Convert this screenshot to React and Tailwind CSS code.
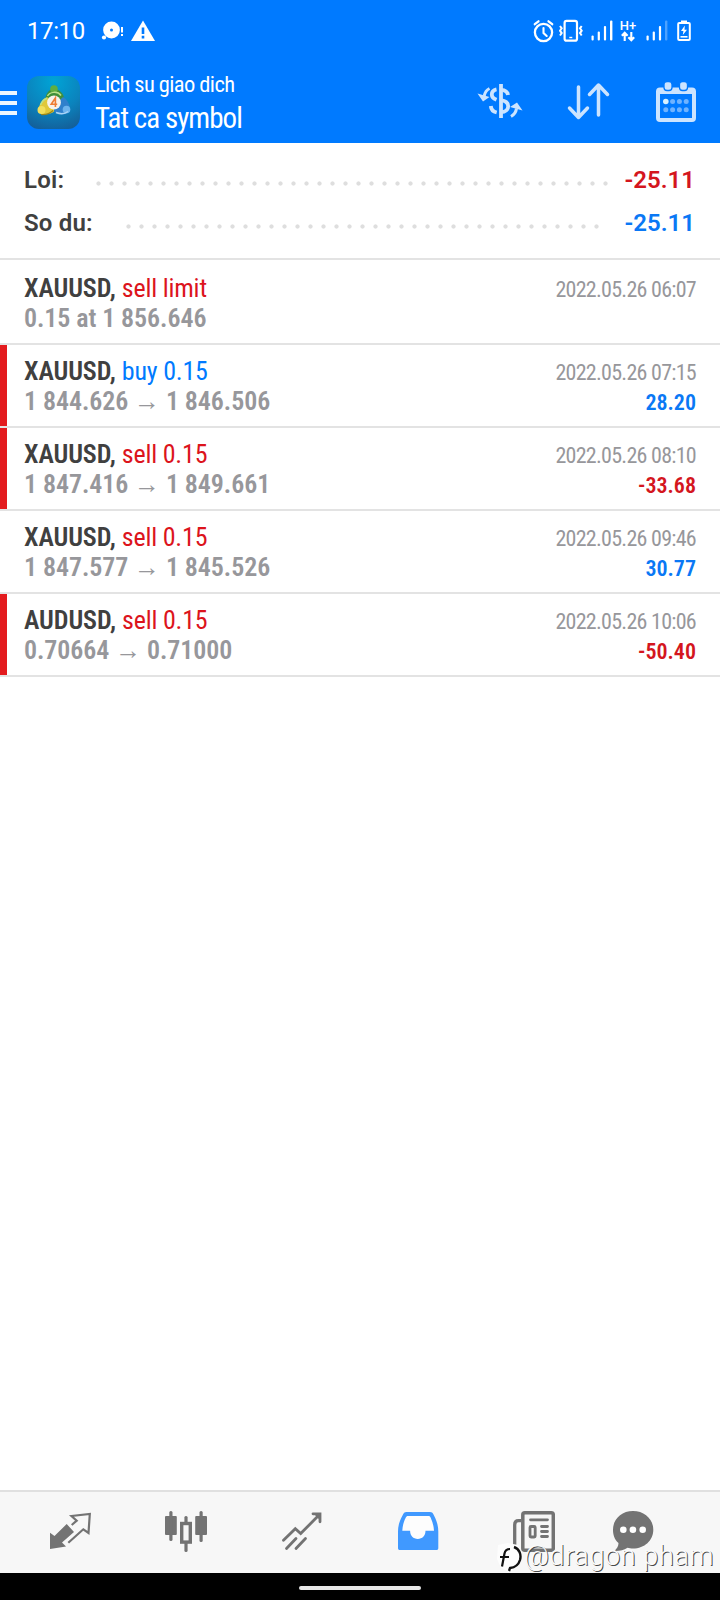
import { clsx } from "clsx";

const deals = [
  { symbol: "XAUUSD", action: "sell limit", side: "sell", detail: ["0.15 at 1 856.646"], time: "2022.05.26 06:07" },
  { symbol: "XAUUSD", action: "buy 0.15", side: "buy", detail: ["1 844.626", "1 846.506"], time: "2022.05.26 07:15", profit: "28.20", marked: true },
  { symbol: "XAUUSD", action: "sell 0.15", side: "sell", detail: ["1 847.416", "1 849.661"], time: "2022.05.26 08:10", profit: "-33.68", marked: true },
  { symbol: "XAUUSD", action: "sell 0.15", side: "sell", detail: ["1 847.577", "1 845.526"], time: "2022.05.26 09:46", profit: "30.77" },
  { symbol: "AUDUSD", action: "sell 0.15", side: "sell", detail: ["0.70664", "0.71000"], time: "2022.05.26 10:06", profit: "-50.40", marked: true },
];

function SignalIcon({ weak }) {
  return (
    <svg width="22" height="22" viewBox="0 0 22 22" fill="#fff">
      <rect x="0.5" y="15.5" width="2.2" height="5" rx="1" />
      <rect x="6.7" y="11.5" width="2.2" height="9" rx="1" />
      <rect x="12.9" y="6" width="2.2" height="14.5" rx="1" />
      <rect x="19" y="0.5" width="2.4" height="20" rx="1" opacity={weak ? 0.3 : 1} />
    </svg>
  );
}

function StatusBar() {
  return (
    <div className="flex h-[62px] items-center pl-[27px] pr-[29px]">
      <span className="w-[74px] text-[24px] leading-none tracking-[-0.4px]">17:10</span>
      <svg width="23" height="21" viewBox="0 0 23 21" fill="#fff">
        <circle cx="10.5" cy="9" r="8.4" />
        <circle cx="10.5" cy="9" r="1.5" fill="#007aff" />
        <circle cx="3" cy="16.5" r="2.1" />
        <rect x="20" y="6" width="2" height="5.5" />
        <rect x="20" y="13" width="2" height="2" />
      </svg>
      <svg className="ml-[7px]" width="24" height="22" viewBox="0 0 24 22">
        <path d="M12 0.5 24 21H0Z" fill="#fff" />
        <path d="M12 7.5v6.5M12 15.8v2.6" stroke="#007aff" strokeWidth="2.6" />
      </svg>
      <div className="ml-auto flex items-center">
        <svg width="22" height="24" viewBox="0 0 22 24" fill="none" stroke="#fff" strokeLinecap="round">
          <circle cx="10.5" cy="13.5" r="8.6" strokeWidth="2.3" />
          <path d="M10.5 9v5l3.2 3" strokeWidth="2.1" />
          <path d="M1.8 5.2 5.5 2.3M19.2 5.2 15.5 2.3" strokeWidth="2.3" />
        </svg>
        <svg className="ml-[4px]" width="24" height="24" viewBox="0 0 24 24" fill="none" stroke="#fff">
          <rect x="5.6" y="1.9" width="12.4" height="19.8" rx="2" strokeWidth="2.2" />
          <path d="M10.3 18.5h3" strokeWidth="1.4" />
          <path d="M1 7l1.7 2.3L1 11.7l1.7 2.4L1 16.5M22.7 7 21 9.3l1.7 2.4L21 14.1l1.7 2.4" strokeWidth="2" />
        </svg>
        <span className="ml-[8px] flex">
          <SignalIcon />
        </span>
        <span className="ml-[6px] flex w-[18px] flex-col items-center">
          <span className="text-[13px] font-medium leading-[11px]">H+</span>
          <svg width="14" height="11" viewBox="0 0 14 11" fill="none" stroke="#fff" strokeWidth="2.1">
            <path d="M3.7 10V2.2M0.8 4.8 3.7 1.8l2.9 3M10.3 1v7.8M7.4 6.2l2.9 3 2.9-3" />
          </svg>
        </span>
        <span className="ml-[9px] flex">
          <SignalIcon weak />
        </span>
        <svg className="ml-[9px]" width="14" height="22" viewBox="0 0 14 22">
          <rect x="4" y="0.5" width="6" height="3" fill="#fff" />
          <rect x="1.2" y="3" width="11.6" height="17" rx="1" fill="none" stroke="#fff" strokeWidth="2" />
          <path d="M7.8 5.5 4 11h2.4l-.6 4L10 9.7H7.5z" fill="#fff" />
          <path d="M3.5 16.8h7" stroke="#fff" strokeWidth="1.6" />
        </svg>
      </div>
    </div>
  );
}

function AppLogo() {
  return (
    <svg className="ml-[10px]" width="53" height="53" viewBox="0 0 53 53">
      <defs>
        <radialGradient id="tile" cx="0.5" cy="0.1" r="1">
          <stop offset="0" stopColor="#00a4d6" />
          <stop offset="0.55" stopColor="#0b83bd" />
          <stop offset="1" stopColor="#155a94" />
        </radialGradient>
      </defs>
      <rect width="53" height="53" rx="12" fill="url(#tile)" />
      <path d="M27 13c-5 0-8.500 5-8.500 10l8.500 4 10-4c0-5.500-5-10-10-10z" fill="#3f8f3a" />
      <path d="M20 21c-5 2-9 9-8.500 15.500 5 3 12 2 15.500-1V27z" fill="#e0c83a" />
      <path d="M36 21c5 3 7.500 9 7 14.500-4 4.500-12 3.500-16 0l2-8z" fill="#2f80cc" />
      <circle cx="27" cy="13" r="3.800" fill="#5fae42" />
      <circle cx="14.500" cy="34" r="4" fill="#f2df5c" />
      <circle cx="39.500" cy="33.500" r="3.800" fill="#6db4ee" />
      <path d="M20.500 20c2-4 10-5.500 13.500-.5M13.500 29c1.500-4 4-6 6.500-6.500" fill="none" stroke="#b9e08c" strokeWidth="1.500" />
      <path d="M29 36.500c4 1.500 9 1.500 12-1" fill="none" stroke="#a9d4f5" strokeWidth="1.500" />
      <path d="M14 38.500c5 .5 9-1 12-4" fill="none" stroke="#98851d" strokeWidth="1.200" />
      <circle cx="27" cy="26.500" r="6.900" fill="#f7f2ec" />
      <path d="M28.400 31v-9l-4.200 6.300h6" fill="none" stroke="#ee7d35" strokeWidth="1.600" />
    </svg>
  );
}

function Toolbar() {
  return (
    <div className="flex h-[81px] items-center">
      <div className="flex flex-col gap-[6px]">
        <span className="h-[4px] w-[17px] bg-[#eaf6ff]" />
        <span className="h-[4px] w-[17px] bg-[#eaf6ff]" />
        <span className="h-[4px] w-[17px] bg-[#eaf6ff]" />
      </div>
      <AppLogo />
      <div className="ml-[15px] font-stretch-[75%]">
        <p className="text-[22.5px] leading-[30px] tracking-[-0.6px]">Lich su giao dich</p>
        <p className="text-[29px] leading-[38px] tracking-[-0.95px]">Tat ca symbol</p>
      </div>
      <svg className="mr-px mb-[3px] ml-auto" width="46" height="36" viewBox="0 0 46 36" fill="none" stroke="#cce4ff" strokeWidth="3.800">
        <path d="M24 1v34" />
        <path d="M31 12c-.5-3.500-3-5-7-5.200M24 17.200c5 .8 7.200 2.800 7.200 6s-2.700 5.800-7.200 6" />
        <path d="M19.500 6.300c-3 .6-4.700 2.400-4.700 5.200 0 2.400 1.400 4 4.700 5.300M13.800 23c.3 3.600 2.400 5.700 5.900 6.500" />
        <path d="M12.500 5.500C9.500 7 8 9 7.200 13M34 33.500c3.500-2 5-4.500 5.500-8" strokeWidth="3" />
        <path d="M0.500 10.500l5.500 8 6.500-4.500zM45.500 27.500l-5.500-8-7 4.500z" fill="#cce4ff" stroke="none" />
      </svg>
      <svg className="mb-[3px] ml-[43px]" width="44" height="38" viewBox="0 0 44 38" fill="none" stroke="#cce4ff" strokeWidth="3.500" strokeLinecap="round" strokeLinejoin="round">
        <path d="M11.500 5v30M2.500 26 11.500 35.500l9-9.500M31.500 33V3.500M22.500 12.500l9-9.500 9 9.500" />
      </svg>
      <svg className="mr-[24px] mb-[2px] ml-[45px]" width="40" height="41" viewBox="0 0 40 41">
        <rect x="2" y="8.500" width="36" height="30.500" rx="2" fill="none" stroke="#cce4ff" strokeWidth="4" />
        <path d="M2 8h36v5H2z" fill="#cce4ff" />
        <g fill="#cce4ff" stroke="#007aff" strokeWidth="1.300">
          <rect x="8" y="0.500" width="8" height="9" rx="3" />
          <rect x="23.500" y="0.500" width="8" height="9" rx="3" />
        </g>
        <g fill="#6fb3ff">
          <circle cx="9.800" cy="20.500" r="2.800" fill="#d8f1ff" />
          <circle cx="16.600" cy="20.500" r="2.500" />
          <circle cx="23.400" cy="20.500" r="2.500" />
          <circle cx="30.200" cy="20.500" r="2.500" />
          <circle cx="9.800" cy="28.800" r="2.500" />
          <circle cx="16.600" cy="28.800" r="2.500" />
          <circle cx="23.400" cy="28.800" r="2.500" />
          <circle cx="30.200" cy="28.800" r="2.500" />
        </g>
      </svg>
    </div>
  );
}

function SummaryRow({ label, value, labelClass, dotsClass, valueClass }) {
  return (
    <div className="flex h-[43px] items-center">
      <span className={clsx("font-semibold tracking-[0.2px] text-[#404040]", labelClass)}>{label}</span>
      <span
        className={clsx(
          "mt-[7px] h-[13px] bg-[radial-gradient(circle,#dedede_1.700px,transparent_2.500px)] bg-[length:13px_13px]",
          dotsClass
        )}
      />
      <span className={clsx("ml-auto font-semibold", valueClass)}>{value}</span>
    </div>
  );
}

function DealRow({ deal, first }) {
  const { symbol, action, side, detail, time, profit, marked } = deal;
  const loss = profit?.startsWith("-");

  return (
    <li className={clsx("flex border-b-2 border-[#e3e3e3]", first ? "h-[85px]" : "h-[83px]")}>
      <span className={clsx("w-[7px]", marked && "bg-[#e31b1e]")} />
      <div
        className={clsx(
          "flex flex-1 justify-between pr-[24px] pl-[17px] font-stretch-[75%]",
          first ? "pt-[13px]" : "pt-[11px]"
        )}
      >
        <div className="text-[26px] leading-[30px]">
          <p className="text-[#404040]">
            <span className="font-semibold tracking-[-0.1px]">{symbol},</span>{" "}
            <span className={clsx("tracking-[-0.2px]", side === "buy" ? "text-[#007aff]" : "text-[#dc141c]")}>
              {action}
            </span>
          </p>
          <p className="font-semibold tracking-[-0.08px] text-[#97979b]">{detail.join(" → ")}</p>
        </div>
        <div className="pt-[2px] text-right text-[22px] leading-[30px]">
          <p className="tracking-[-0.72px] text-[#97979b]">{time}</p>
          {profit && (
            <p className={clsx("font-semibold", loss ? "text-[#d4161e]" : "text-[#0a78f5]")}>{profit}</p>
          )}
        </div>
      </div>
    </li>
  );
}

function NavIcon({ children, className }) {
  return (
    <svg className={className} width="42" height="42" viewBox="0 0 42 42" fill="none">
      {children}
    </svg>
  );
}

function BottomNav() {
  return (
    <nav className="relative flex h-[83px] gap-[74px] border-t-2 border-[#e0e0e0] bg-[#f7f7f7] pt-[19px] pl-[49px]">
      <NavIcon>
        <path d="M1 21.700 5.500 25 17.700 13 25 21 13 31.500l4 4L1 38z" fill="#737373" />
        <path d="M22.700 14l5-4.300L22.500 5l18.300-2-1.300 19-5.200-3.700-15 13.500" stroke="#737373" strokeWidth="2.200" />
      </NavIcon>
      <NavIcon>
        <g fill="#737373">
          <rect x="0" y="5" width="11.800" height="19" rx="1" />
          <rect x="4.300" y="0" width="3.200" height="30" rx="1.500" />
          <rect x="30.200" y="5" width="11.800" height="19" rx="1" />
          <rect x="34.500" y="0" width="3.200" height="31" rx="1.500" />
          <rect x="19.400" y="5" width="3.200" height="7" rx="1.500" />
          <rect x="19.400" y="31" width="3.200" height="10" rx="1.500" />
        </g>
        <rect x="16.700" y="12.500" width="8.600" height="18.600" stroke="#737373" strokeWidth="3.400" />
      </NavIcon>
      <NavIcon>
        <g stroke="#737373" strokeWidth="2.800" strokeLinecap="round">
          <path d="M2.500 29.300 14.300 17.700l5.400 4.900L38 4" />
          <path d="M32 2.800h7v8" />
          <path d="M5.500 37.500l9.500-10M15 37.500l9.500-10" />
        </g>
        <path d="M32 2h7.800v8z" fill="#737373" />
      </NavIcon>
      <NavIcon>
        <path d="M9.500 1h23.500c2 0 3 1 4 3.500 3 6 4.300 10.500 4.300 16V37c0 1.500-.7 2-2 2H3c-1.300 0-2-.5-2-2V20.500c0-5.500 1.300-10 4.500-16C6.500 2 7.500 1 9.500 1z" fill="#4099ff" />
        <path d="M11 5h20.500c1.200 0 1.700.5 2.200 1.700 2 4.300 3 8.300 3.300 13.100h-8.500c0 5-3.200 8.200-7.700 8.200s-7.700-3.200-7.700-8.200H5.300C5.600 15 6.500 11 8.700 6.700 9.300 5.500 9.800 5 11 5z" fill="#fdfdfd" />
      </NavIcon>
      <NavIcon>
        <rect x="9.800" y="1.800" width="30.500" height="37.500" rx="2" stroke="#737373" strokeWidth="3.500" />
        <path d="M8 9.700H5.500c-2.500 0-3.800 1.500-3.800 4V40" stroke="#737373" strokeWidth="3.300" />
        <path d="M17.500 8.800h17M28.500 15.500h6M28.500 20.500h6M28.500 25.500h6" stroke="#737373" strokeWidth="2.800" strokeLinecap="round" />
        <rect x="17" y="15.500" width="5.200" height="10.500" rx="1" stroke="#737373" strokeWidth="2.800" />
      </NavIcon>
      <NavIcon className="-ml-[17px]">
        <path d="M21 0c11.500 0 20.300 8 20.300 18.700S32.500 37.500 21 37.500c-2 0-4-.3-5.500-.7-4 2.500-8.500 3.500-13 3.200 2.500-2.500 4-5 4-8C2.500 28.500 1 24 1 18.700 1 8 9.500 0 21 0z" fill="#737373" />
        <g fill="#fff">
          <circle cx="11.300" cy="18.800" r="3.300" />
          <circle cx="20.900" cy="18.800" r="3.300" />
          <circle cx="30.700" cy="18.800" r="3.300" />
        </g>
      </NavIcon>

      <div className="absolute top-[47px] right-[6px] flex items-center">
        <svg width="30" height="34" viewBox="0 0 30 34" fill="none">
          <path d="M4 6 14 4l10 2 4 9-4 12-8 6-9-4-4-9z" fill="#fdfdfd" />
          <path d="M6 18h9M8 27.500l2.500-13c.6-3 2-4.500 5.500-4.500" stroke="#111" strokeWidth="2.200" />
          <path d="M20 8c5.500 2 7.500 7.500 6 13-1.500 5-6 7.500-10 8l-1 3" stroke="#111" strokeWidth="2.400" />
        </svg>
        <span className="text-[27px] font-light leading-[34px] tracking-[0.600px] text-[#fbfbfb] [text-shadow:1px_1px_0_#4a4a4a]">
          @dragon pham
        </span>
      </div>
    </nav>
  );
}

export default function App() {
  return (
    <div className="flex h-[1600px] w-[720px] flex-col overflow-hidden bg-white font-['Roboto','Liberation_Sans',sans-serif]">
      <header className="h-[143px] bg-[#007aff] text-white">
        <StatusBar />
        <Toolbar />
      </header>

      <section className="h-[117px] border-b-2 border-[#e3e3e3] pt-[15px] pr-[25px] pl-[24px] text-[24px]">
        <SummaryRow label="Loi:" value="-25.11" labelClass="w-[68px]" dotsClass="w-[520px]" valueClass="text-[#d4161e]" />
        <SummaryRow label="So du:" value="-25.11" labelClass="w-[98px]" dotsClass="w-[481px]" valueClass="text-[#0a78f5]" />
      </section>

      <ul className="flex-1">
        {deals.map((deal, i) => (
          <DealRow key={deal.time} deal={deal} first={i === 0} />
        ))}
      </ul>

      <BottomNav />
      <div className="flex h-[27px] justify-center bg-black pt-[13px]">
        <span className="h-[4px] w-[122px] rounded-full bg-[#e6e6e6]" />
      </div>
    </div>
  );
}
